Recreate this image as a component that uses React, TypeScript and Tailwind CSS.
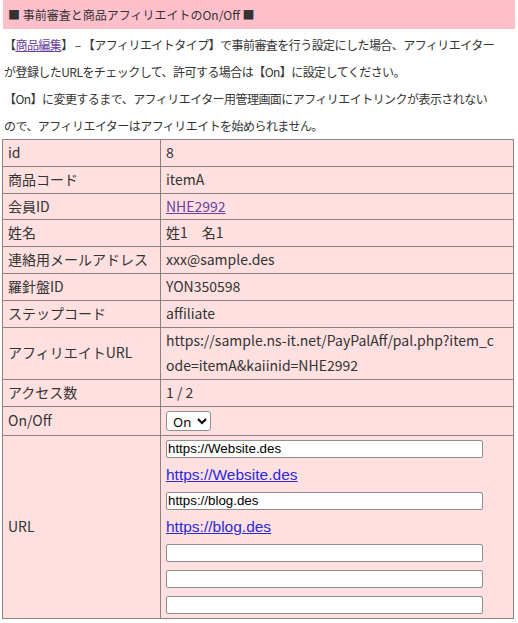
import React from "react";

const rows: { label: string; value: React.ReactNode }[] = [
  { label: "id", value: "8" },
  { label: "商品コード", value: "itemA" },
  {
    label: "会員ID",
    value: (
      <a href="#" className="text-[#6b3fa0] underline">
        NHE2992
      </a>
    ),
  },
  { label: "姓名", value: "姓1　名1" },
  { label: "連絡用メールアドレス", value: "xxx@sample.des" },
  { label: "羅針盤ID", value: "YON350598" },
  { label: "ステップコード", value: "affiliate" },
  {
    label: "アフィリエイトURL",
    value: (
      <>
        https://sample.ns-it.net/PayPalAff/pal.php?item_c
        <br />
        ode=itemA&amp;kaiinid=NHE2992
      </>
    ),
  },
  { label: "アクセス数", value: "1 / 2" },
];

const UrlInput = ({ value }: { value?: string }) => (
  <input
    type="text"
    defaultValue={value}
    className="w-[317px] h-[18px] align-middle bg-white border border-[#8f8f8f] rounded-[2px] px-[1px] text-[13.33px] text-black font-['Liberation_Sans',Arial,sans-serif] outline-none"
  />
);

const UrlLink = ({ href }: { href: string }) => (
  <a href="#" className="text-[15.5px] text-[#2a2ad8] underline font-['Liberation_Sans',Arial,sans-serif]">
    {href}
  </a>
);

const cell = "border border-[#8c8282] px-[5px] py-0 align-middle";

export default function App() {
  return (
    <div className="w-[518px] h-[623px] bg-white px-[2px] text-[#333] font-['Noto_Sans_CJK_JP','Noto_Sans',sans-serif]">
      <div className="ml-px mr-[1px] h-[29px] bg-[#ffc0cb] flex items-center px-[5px] text-[12px]">
        ■ 事前審査と商品アフィリエイトのOn/Off ■
      </div>
      <p className="pl-[2px] pt-[2px] text-[12px] leading-[27px] tracking-[-0.55px] whitespace-nowrap">
        【
        <a href="#" className="text-[#6b3fa0] underline">
          商品編集
        </a>
        】 – 【アフィリエイトタイプ】で事前審査を行う設定にした場合、アフィリエイター
        <br />
        が登録したURLをチェックして、許可する場合は【On】に設定してください。
        <br />
        【On】に変更するまで、アフィリエイター用管理画面にアフィリエイトリンクが表示されない
        <br />
        ので、アフィリエイターはアフィリエイトを始められません。
      </p>
      <table className="w-[512px] border-collapse border border-[#8c8282] bg-[#ffe0e0] text-[14px] leading-[25.8px] table-fixed">
        <colgroup>
          <col className="w-[158px]" />
          <col />
        </colgroup>
        <tbody>
          {rows.map((r) => (
            <tr key={r.label}>
              <td className={cell}>{r.label}</td>
              <td className={cell}>{r.value}</td>
            </tr>
          ))}
          <tr>
            <td className={cell}>On/Off</td>
            <td className="border border-[#8c8282] px-[5px] py-[4px] align-middle leading-none">
              <select className="h-[20px] align-middle bg-white border border-[#8f8f8f] rounded-[3px] pl-[2px] pr-[1px] text-[13px] font-['Noto_Sans',sans-serif] text-black">
                <option>On</option>
                <option>Off</option>
              </select>
            </td>
          </tr>
          <tr>
            <td className={cell}>URL</td>
            <td className={cell}>
              <div className="flex flex-col">
                <div className="h-[26px] flex items-center">
                  <UrlInput value="https://Website.des" />
                </div>
                <div className="h-[26px] flex items-center">
                  <UrlLink href="https://Website.des" />
                </div>
                <div className="h-[26px] flex items-center">
                  <UrlInput value="https://blog.des" />
                </div>
                <div className="h-[26px] flex items-center">
                  <UrlLink href="https://blog.des" />
                </div>
                <div className="h-[26px] flex items-center">
                  <UrlInput />
                </div>
                <div className="h-[26px] flex items-center">
                  <UrlInput />
                </div>
                <div className="h-[26px] flex items-center">
                  <UrlInput />
                </div>
              </div>
            </td>
          </tr>
        </tbody>
      </table>
    </div>
  );
}
